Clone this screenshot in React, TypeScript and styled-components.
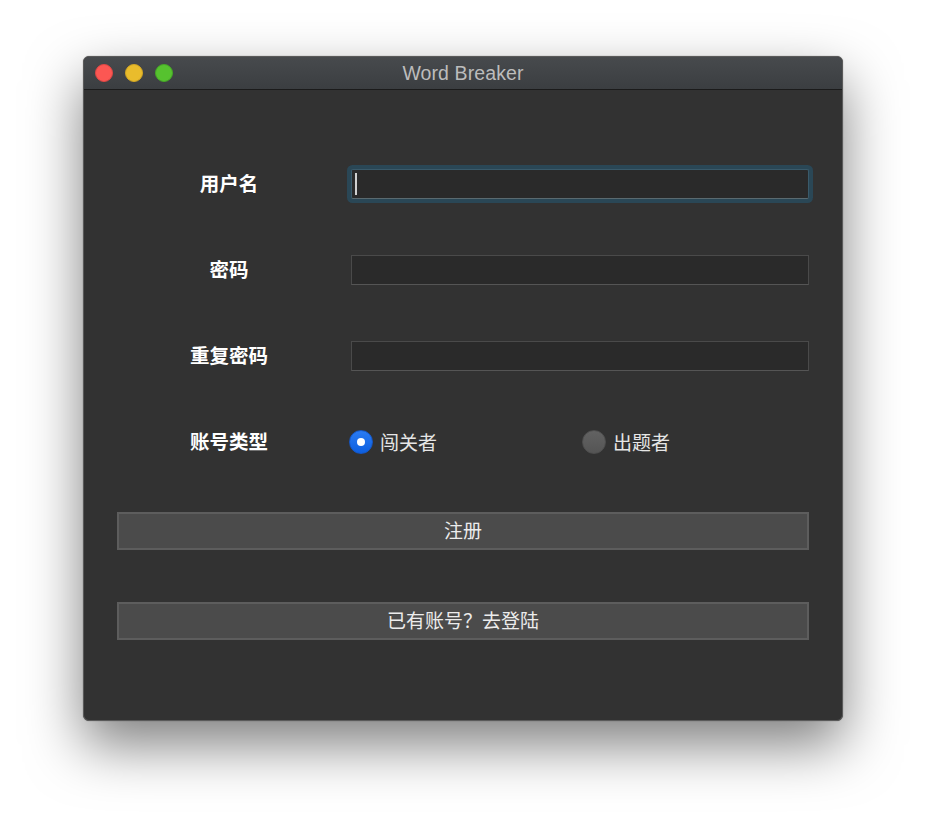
import React from "react";
import styled, { createGlobalStyle } from "styled-components";

const Global = createGlobalStyle`
  html, body { margin: 0; padding: 0; background: #ffffff; }
  * { box-sizing: border-box; }
`;

const CJK = `"Noto Sans CJK SC", "Noto Sans", sans-serif`;

const Page = styled.div`
  width: 926px;
  height: 832px;
  padding: 56px 0 0 83px;
  background: #ffffff;
`;

const Window = styled.div`
  width: 760px;
  height: 665px;
  border-radius: 6px;
  background: #323232;
  border: 1px solid #5a5a5a;
  box-shadow: 0 24px 55px rgba(0, 0, 0, 0.5), 0 0 1px rgba(0, 0, 0, 0.6);
  overflow: hidden;
  display: flex;
  flex-direction: column;
`;

const TitleBar = styled.div`
  height: 33px;
  flex: none;
  position: relative;
  display: flex;
  align-items: center;
  justify-content: center;
  background: linear-gradient(#474a4d, #3b3e41);
  border-bottom: 1px solid #1b1b1b;
`;

const Lights = styled.div`
  position: absolute;
  left: 11px;
  top: 7px;
  display: flex;
  gap: 12px;
`;

const Light = styled.span<{ $c: string; $b: string }>`
  width: 18px;
  height: 18px;
  border-radius: 50%;
  background: ${(p) => p.$c};
  border: 1px solid ${(p) => p.$b};
`;

const Title = styled.div`
  font-family: "Liberation Sans", Arial, sans-serif;
  font-size: 19.5px;
  color: #bcbcbc;
  letter-spacing: 0.1px;
`;

const Content = styled.div`
  padding: 79px 33px 0 33px;
  display: flex;
  flex-direction: column;
`;

const Form = styled.div`
  display: grid;
  grid-template-columns: 224px 458px;
  column-gap: 10px;
  row-gap: 56px;
  align-items: center;
`;

const Label = styled.div`
  font-family: ${CJK};
  font-weight: 700;
  font-size: 19.5px;
  color: #ffffff;
  text-align: center;
  line-height: 30px;
  margin-top: -2px;
`;

const Input = styled.div<{ $focus?: boolean }>`
  height: 30px;
  background: #2a2a2a;
  border: 1px solid #4a4a4a;
  border-bottom-color: #555555;
  position: relative;
  ${(p) =>
    p.$focus
      ? `box-shadow: 0 0 0 4px #2a4756; border-radius: 2px; border-color: #3a5a6a; border-bottom-color:#5a6a70;`
      : ""}
`;

const Caret = styled.span`
  position: absolute;
  left: 3px;
  top: 3px;
  width: 2px;
  height: 22px;
  background: #d0d0d0;
`;

const RadioGroup = styled.div`
  display: grid;
  grid-template-columns: 233px 225px;
  margin-left: -2px;
  height: 30px;
  align-items: center;
`;

const RadioItem = styled.label`
  display: flex;
  align-items: center;
  gap: 7px;
  font-family: ${CJK};
  font-size: 19px;
  color: #e6e6e6;
`;

const RadioText = styled.span`
  margin-top: -2px;
`;

const RadioDot = styled.span<{ $on?: boolean }>`
  width: 24px;
  height: 24px;
  border-radius: 50%;
  display: flex;
  align-items: center;
  justify-content: center;
  background: ${(p) =>
    p.$on ? "linear-gradient(#2a7bf2, #0d5fe0)" : "linear-gradient(#626262, #555555)"};
  border: 1px solid ${(p) => (p.$on ? "#1456c6" : "#4e4e4e")};
  &::after {
    content: "";
    display: ${(p) => (p.$on ? "block" : "none")};
    width: 8px;
    height: 8px;
    border-radius: 50%;
    background: #ffffff;
  }
`;

const Button = styled.div<{ $mt: number }>`
  margin-top: ${(p) => p.$mt}px;
  width: 692px;
  height: 38px;
  padding-bottom: 3px;
  background: #4b4b4b;
  border: 2px solid #5d5d5d;
  display: flex;
  align-items: center;
  justify-content: center;
  font-family: ${CJK};
  font-size: 19px;
  color: #ececec;
`;

export default function App() {
  return (
    <>
      <Global />
      <Page>
        <Window>
          <TitleBar>
            <Lights>
              <Light $c="#fc5753" $b="#df4744" />
              <Light $c="#e9bc2c" $b="#d2a623" />
              <Light $c="#56c22f" $b="#45a826" />
            </Lights>
            <Title>Word Breaker</Title>
          </TitleBar>
          <Content>
            <Form>
              <Label>用户名</Label>
              <Input $focus>
                <Caret />
              </Input>
              <Label>密码</Label>
              <Input />
              <Label>重复密码</Label>
              <Input />
              <Label>账号类型</Label>
              <RadioGroup>
                <RadioItem>
                  <RadioDot $on />
                  <RadioText>闯关者</RadioText>
                </RadioItem>
                <RadioItem>
                  <RadioDot />
                  <RadioText>出题者</RadioText>
                </RadioItem>
              </RadioGroup>
            </Form>
            <Button $mt={55}>注册</Button>
            <Button $mt={52}>已有账号？去登陆</Button>
          </Content>
        </Window>
      </Page>
    </>
  );
}
